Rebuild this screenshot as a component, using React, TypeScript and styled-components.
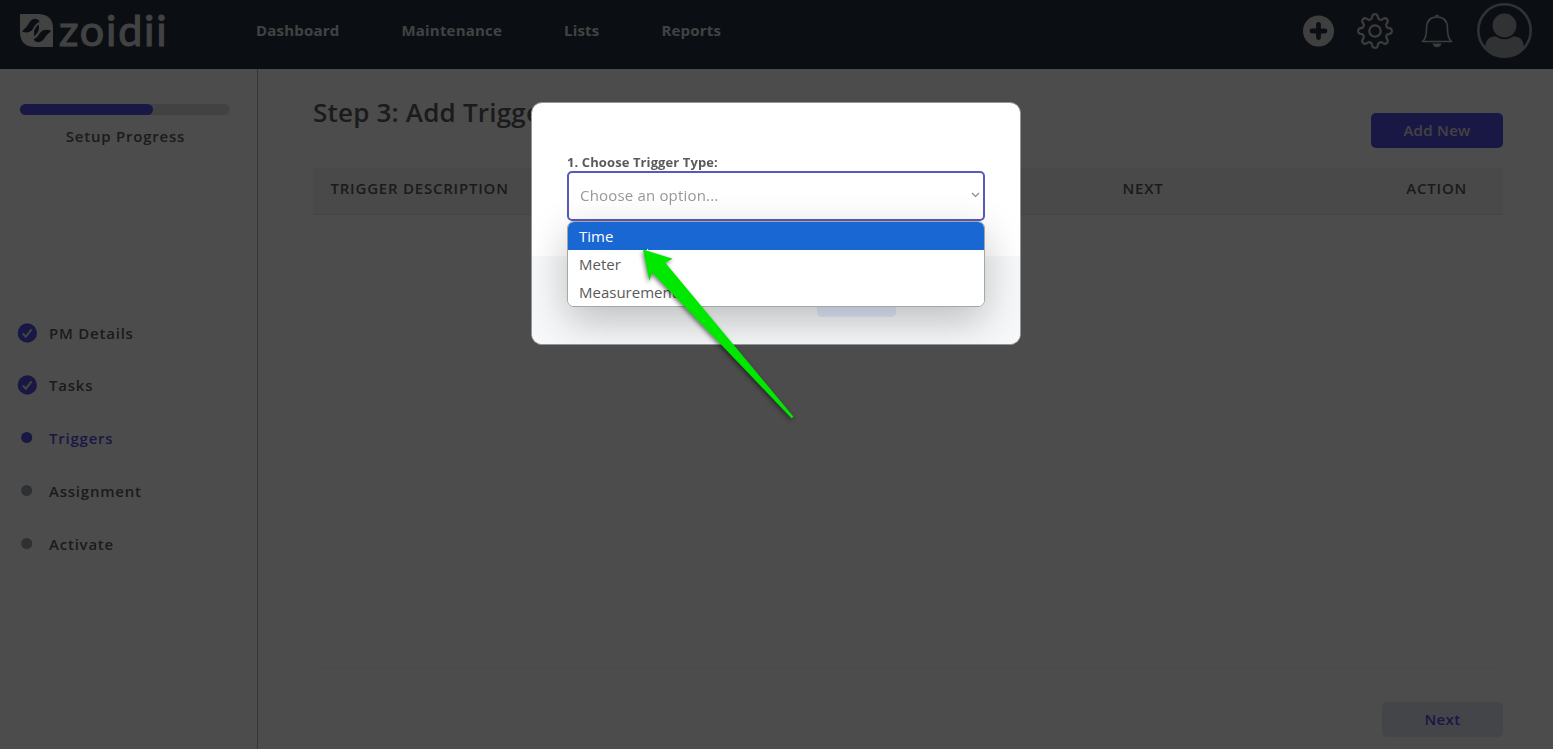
import React from "react";
import styled, { createGlobalStyle } from "styled-components";

const Global = createGlobalStyle`
  * { box-sizing: border-box; }
  body { margin: 0; background: #fff; color: #5a5a5a; font: 400 15px/20px "Open Sans", sans-serif; overflow: hidden; }
  button { font: inherit; border: 0; padding: 0; }
`;

const Page = styled.div`
  height: 749px;
  display: flex;
  flex-direction: column;
`;
const Header = styled.header`
  height: 69px;
  flex: none;
  display: flex;
  align-items: flex-start;
  background: #253243;
  color: #dcdcdc;
`;
const Brand = styled.div`
  display: flex;
  width: 256px;
  padding: 14px 0 0 20px;
  gap: 6px;
`;
const BrandName = styled.span`
  font: 400 43px/31px Lato, sans-serif;
  letter-spacing: 1.8px;
  -webkit-text-stroke: 1.1px #dcdcdc;
`;
const Nav = styled.nav`
  display: flex;
  flex: 1;
  gap: 61.9px;
  padding-top: 20px;
  font-weight: 700;
  letter-spacing: 0.21px;
`;
const Tools = styled.div`
  display: flex;
  align-items: center;
  height: 61px;
  padding-right: 20px;
`;
const Tool = styled.svg<{ $gap: number }>`
  display: block;
  margin-left: ${(p) => p.$gap}px;
`;
const Body = styled.div`
  display: flex;
  flex: 1;
  min-height: 0;
`;
const Sidebar = styled.aside`
  width: 258px;
  flex: none;
  border-right: 1px solid #b4b4b4;
  padding: 35px 27px 0 20px;
  font-weight: 600;
  letter-spacing: 0.78px;
`;
const Track = styled.div`
  height: 11px;
  border-radius: 6px;
  background: #dcdcdc;
`;
const Fill = styled.div`
  width: 133px;
  height: 11px;
  border-radius: 6px;
  background: #5650e5;
`;
const ProgressLabel = styled.div`
  margin-top: 11px;
  padding-left: 1px;
  text-align: center;
`;
const Steps = styled.ul`
  list-style: none;
  margin: 160.2px 0 0 -3px;
  padding: 0;
`;
const Step = styled.li<{ $active?: boolean }>`
  display: flex;
  align-items: center;
  gap: 12px;
  height: 52.75px;
  color: ${(p) => (p.$active ? "#5650e5" : "#5a5a5a")};
`;
const Main = styled.main`
  flex: 1;
  padding: 26px 50px 0 55px;
`;
const TitleRow = styled.div`
  display: flex;
  justify-content: space-between;
  height: 73px;
`;
const Title = styled.h1`
  margin: 0;
  font-size: 26px;
  line-height: 34px;
  font-weight: 600;
  letter-spacing: 0.2px;
`;
const AddButton = styled.button`
  width: 132px;
  height: 35px;
  margin-top: 18px;
  padding-bottom: 2px;
  border-radius: 5px;
  background: #5650e5;
  color: #dedede;
  font-weight: 600;
  letter-spacing: 0.3px;
`;
const Table = styled.section`
  height: 500px;
  border-bottom: 1px solid #f3f3f3;
`;
const TableHead = styled.div`
  display: grid;
  grid-template-columns: 792px 1fr auto;
  height: 47px;
  padding: 10px 36px 0 17.5px;
  background: #f3f3f8;
  border-bottom: 1px solid #e3e4e6;
  font-weight: 600;
  letter-spacing: 0.78px;
`;
const Foot = styled.div`
  display: flex;
  justify-content: flex-end;
  padding-top: 34px;
`;
const NextButton = styled.button`
  width: 121px;
  height: 35px;
  padding-bottom: 1px;
  border-radius: 5px;
  background: #e4e7f5;
  color: #5650e5;
  font-weight: 600;
  letter-spacing: 0.4px;
`;
const Backdrop = styled.div`
  position: fixed;
  inset: 0;
  display: flex;
  justify-content: center;
  align-items: flex-start;
  padding: 102px 1px 0 0;
  background: rgba(0, 0, 0, 0.7);
`;
const Dialog = styled.div`
  position: relative;
  width: 490px;
  height: 243px;
  border: 1px solid #8f9698;
  border-radius: 11px;
  background: #fff;
  overflow: hidden;
`;
const DialogBody = styled.div`
  height: 153px;
  padding: 50px 35px 0;
`;
const Label = styled.label`
  display: block;
  height: 18px;
  font-size: 13px;
  line-height: 18px;
  font-weight: 700;
  letter-spacing: 0.1px;
`;
const Select = styled.div`
  display: flex;
  align-items: center;
  justify-content: space-between;
  height: 50px;
  padding: 0 3px 2px 11px;
  border: 2px solid #5b58bd;
  border-radius: 5px;
  color: #999;
  letter-spacing: 0.18px;
`;
const DialogFoot = styled.div`
  display: flex;
  height: 88px;
  padding: 26px 0 0 285px;
  background: #f7f8fa;
`;
const DialogButton = styled.div`
  width: 79px;
  height: 35px;
  border-radius: 5px;
  background: #e2e9fb;
`;
const Options = styled.div`
  position: absolute;
  left: 35px;
  top: 118px;
  width: 418px;
  height: 86px;
  border: 1px solid #a3a8a5;
  border-radius: 7px;
  background: #fff;
  overflow: hidden;
  box-shadow: 0 14px 40px rgba(0, 0, 0, 0.24);
`;
const Option = styled.div<{ $on?: boolean }>`
  height: 28px;
  padding-left: 11px;
  line-height: 29px;
  background: ${(p) => (p.$on ? "#1967d2" : "#fff")};
  color: ${(p) => (p.$on ? "#fff" : "#5a5a5a")};
`;
const Arrow = styled.svg`
  position: fixed;
  left: 630px;
  top: 240px;
  filter: drop-shadow(-1px 2px 2px rgba(0, 0, 0, 0.5));
`;

const gearPath = (() => {
  const pts: string[] = [];
  for (let i = 0; i < 160; i++) {
    const t = (i / 160) * Math.PI * 2;
    const wave = Math.tanh(1.6 * Math.cos(8 * t)) / Math.tanh(1.6);
    const r = 14.6 + 2.2 * wave;
    pts.push(`${(18 + r * Math.sin(t)).toFixed(2)} ${(18 - r * Math.cos(t)).toFixed(2)}`);
  }
  return `M${pts.join("L")}Z`;
})();

const steps = [
  { name: "PM Details", state: "done" },
  { name: "Tasks", state: "done" },
  { name: "Triggers", state: "active" },
  { name: "Assignment", state: "todo" },
  { name: "Activate", state: "todo" },
];

function StepMark({ state }: { state: string }) {
  return (
    <svg width="20" height="20" viewBox="0 0 20 20">
      {state === "done" ? (
        <>
          <circle cx="10.3" cy="10" r="9.7" fill="#5650e5" />
          <path d="M5.8 10.5l3 3.2 5.8-7.3" fill="none" stroke="#e8e8e8" strokeWidth="2" />
        </>
      ) : (
        <circle cx="9.7" cy="9.5" r="5.6" fill={state === "active" ? "#5650e5" : "#9ca3af"} />
      )}
    </svg>
  );
}

export default function App() {
  return (
    <Page>
      <Global />
      <Header>
        <Brand>
          <svg width="33" height="33" viewBox="0 0 33 33">
            <path d="M0 0H19Q33 1 33 14V33H14Q0 32 0 18Z" fill="#dcdcdc" />
            <path
              d="M3 17.3Q9.5 19 12.5 14.3Q15 9 18.8 7.3Q15 3.5 10.8 7.5Q7.5 13.5 3 17.3ZM18.3 11.5Q19 17 14.7 21Q14 15.5 18.3 11.5ZM30.2 17Q24 15 20.5 19.3Q18 24 14.5 25.7Q18 29.5 22.5 25.7Q25.5 20.5 30.2 17Z"
              fill="#253243"
              stroke="#253243"
              strokeWidth="1.3"
              strokeLinejoin="round"
            />
          </svg>
          <BrandName>zoidii</BrandName>
        </Brand>
        <Nav>
          <span>Dashboard</span>
          <span>Maintenance</span>
          <span>Lists</span>
          <span>Reports</span>
        </Nav>
        <Tools>
          <Tool $gap={0} width="32" height="32" viewBox="0 0 32 32">
            <circle cx="16.5" cy="16" r="15.5" fill="#d4d4d4" />
            <path d="M16.5 9.5v13M10 16h13" stroke="#253243" strokeWidth="4.8" strokeLinecap="round" />
          </Tool>
          <Tool $gap={23} width="36" height="36" viewBox="0 0 36 36" fill="none" stroke="#c8c8c8" strokeWidth="2.2">
            <path d={gearPath} />
            <circle cx="18" cy="18" r="5.7" />
          </Tool>
          <Tool $gap={27} width="34" height="36" viewBox="0 0 34 36">
            <path
              d="M2.5 28.5C6 26 6.5 22 6.5 15.5C6.5 8 10 4 17 4S27.5 8 27.5 15.5C27.5 22 28 26 31.5 28.5Z"
              fill="none"
              stroke="#c8c8c8"
              strokeWidth="1.6"
              strokeLinejoin="round"
            />
            <path d="M15 3.5a2 2 0 0 1 4 0zM12.5 30.5h9q-1 3.8-4.5 3.8t-4.5-3.8z" fill="#c8c8c8" />
          </Tool>
          <Tool $gap={23} width="56" height="56" viewBox="0 0 56 56">
            <defs>
              <clipPath id="avatar"><circle cx="27.5" cy="27.5" r="26.2" /></clipPath>
            </defs>
            <circle cx="27.5" cy="27.5" r="26.2" fill="none" stroke="#a4a8ae" strokeWidth="2.6" />
            <g clipPath="url(#avatar)">
              <path d="M8 56V44Q9 33 18 33.5H37Q46 33 47 44V56Z" fill="#a4a8ae" />
              <circle cx="27.5" cy="22.5" r="12.8" fill="#a4a8ae" stroke="#253243" strokeWidth="1.8" />
            </g>
          </Tool>
        </Tools>
      </Header>
      <Body>
        <Sidebar>
          <Track><Fill /></Track>
          <ProgressLabel>Setup Progress</ProgressLabel>
          <Steps>
            {steps.map((s) => (
              <Step key={s.name} $active={s.state === "active"}>
                <StepMark state={s.state} />
                {s.name}
              </Step>
            ))}
          </Steps>
        </Sidebar>
        <Main>
          <TitleRow>
            <Title>Step 3: Add Triggers</Title>
            <AddButton>Add New</AddButton>
          </TitleRow>
          <Table>
            <TableHead>
              <span>TRIGGER DESCRIPTION</span>
              <span>NEXT</span>
              <span>ACTION</span>
            </TableHead>
          </Table>
          <Foot><NextButton>Next</NextButton></Foot>
        </Main>
      </Body>
      <Backdrop>
        <Dialog>
          <DialogBody>
            <Label>1. Choose Trigger Type:</Label>
            <Select>
              Choose an option...
              <svg width="9" height="6" viewBox="0 0 9 6">
                <path d="M1 1l3.5 3.5L8 1" fill="none" stroke="#888" strokeWidth="1.2" />
              </svg>
            </Select>
          </DialogBody>
          <DialogFoot><DialogButton /></DialogFoot>
          <Options>
            <Option $on>Time</Option>
            <Option>Meter</Option>
            <Option>Measurement</Option>
          </Options>
        </Dialog>
      </Backdrop>
      <Arrow width="175" height="190" viewBox="630 240 175 190">
        <path d="M643 249.5L672.7 258.7L665.3 262.7L793.5 416.7L791.5 418.3L652.3 272.7L649.3 280.7Z" fill="#00e800" />
        <path d="M647 248.5l2.5 2.5h-2.5z" fill="#fff" />
      </Arrow>
    </Page>
  );
}
